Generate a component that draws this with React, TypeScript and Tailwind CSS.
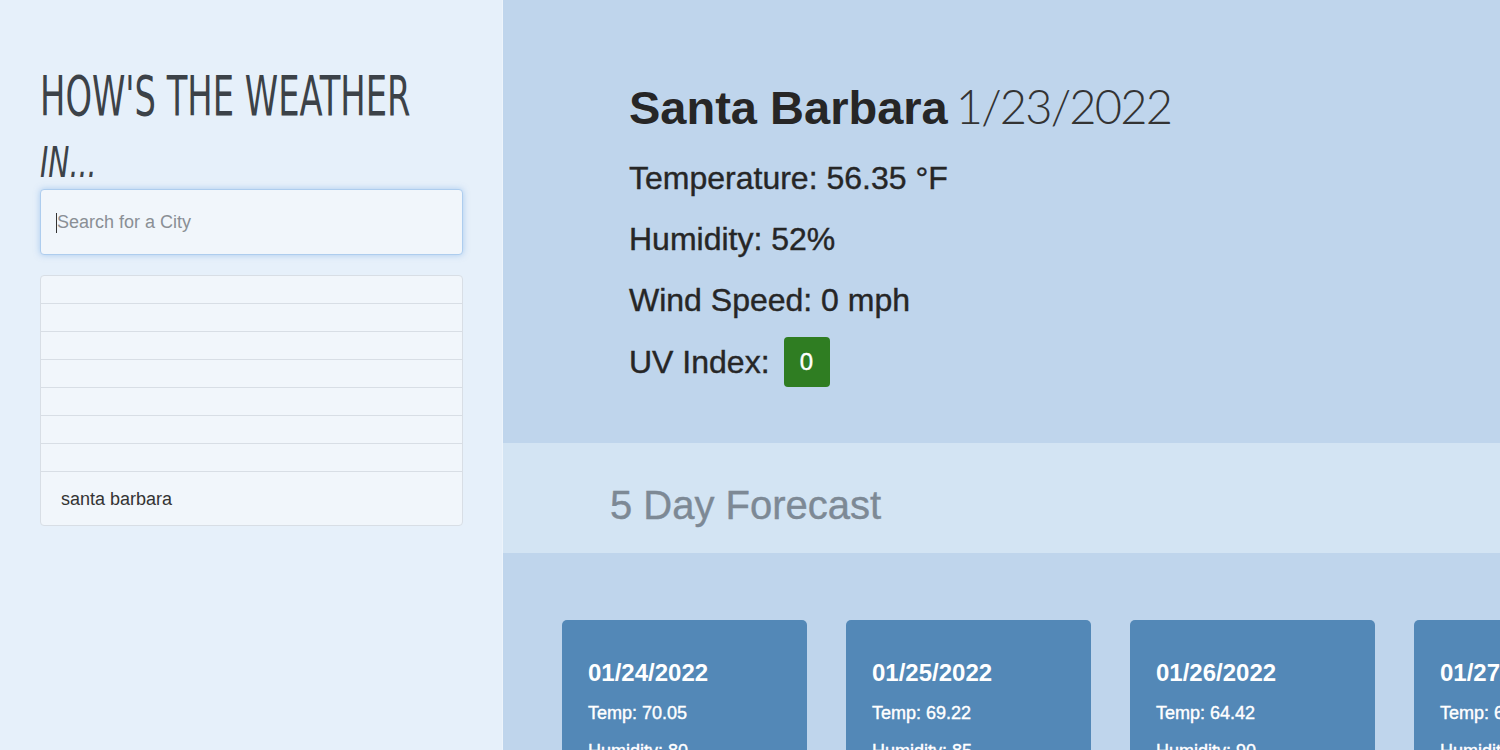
const forecast = [
  { date: "01/24/2022", temp: "70.05", humidity: "80" },
  { date: "01/25/2022", temp: "69.22", humidity: "85" },
  { date: "01/26/2022", temp: "64.42", humidity: "90" },
  { date: "01/27/2022", temp: "63.18", humidity: "88" },
  { date: "01/28/2022", temp: "61.90", humidity: "79" },
];

const body = "font-['Liberation_Sans',Arial,sans-serif]";
const narrow = "font-['Liberation_Sans_Narrow','Arial_Narrow','DejaVu_Sans_Condensed',sans-serif]";
const medium = "[-webkit-text-stroke:0.4px_currentColor]";

export default function App() {
  return (
    <div className={`flex h-[750px] w-[1500px] overflow-hidden ${body}`}>
      {/* sidebar */}
      <aside className="w-[503px] shrink-0 bg-[#e6f0fa] border-r border-[#edf4fb] px-[40px] pt-[68px]">
        <h1 className={`${narrow} text-[56px] leading-none text-[#3c4248] whitespace-nowrap origin-left scale-x-[0.67]`}>
          HOW'S THE WEATHER
        </h1>
        <h3 className={`${narrow} italic text-[43px] leading-none text-[#3c4248] mt-[17px] origin-left scale-x-[0.73]`}>
          IN...
        </h3>
        <div className="mt-[5px] h-[66px] w-[423px] rounded-[4px] border border-[#aecdee] bg-[#f1f6fb] shadow-[0_0_6px_rgba(110,165,230,0.5)] flex items-center px-[15px] pt-[1px]">
          <span className="w-px h-[20px] bg-[#333]" />
          <span className="text-[18px] text-[#8a8f95]">Search for a City</span>
        </div>
        <div className="mt-[20px] w-[423px] rounded-[4px] border border-[#d8dee5] bg-[#f1f6fb] overflow-hidden">
          {Array.from({ length: 7 }).map((_, i) => (
            <div key={i} className="h-[28px] border-b border-[#d8dee5]" />
          ))}
          <div className="h-[53px] flex items-center pl-[20px] text-[18px] leading-none text-[#333]">
            santa barbara
          </div>
        </div>
      </aside>

      {/* main */}
      <main className="flex-1 bg-[#bfd5ec] min-w-0">
        <section className="h-[443px] pl-[126px] pt-[83px] text-[#262626]">
          <h2 className="flex items-baseline gap-[8px] whitespace-nowrap leading-none">
            <span className="text-[47px] font-bold">Santa Barbara</span>
            <span className="text-[47px] font-light font-['Lato',sans-serif] tracking-[-1.8px] text-[#333]">1/23/2022</span>
          </h2>
          <p className={`text-[32px] leading-none mt-[31px] ${medium}`}>Temperature: 56.35 °F</p>
          <p className={`text-[32px] leading-none mt-[29px] ${medium}`}>Humidity: 52%</p>
          <p className={`text-[32px] leading-none mt-[29px] ${medium}`}>Wind Speed: 0 mph</p>
          <div className="flex items-center gap-[14px] mt-[21px]">
            <span className={`text-[32px] leading-none ${medium}`}>UV Index:</span>
            <span className={`h-[50px] w-[46px] rounded-[4px] bg-[#2f7d22] text-white text-[24px] flex items-center justify-center ${medium}`}>
              0
            </span>
          </div>
        </section>

        <section className="h-[110px] bg-[#d3e4f3] pl-[107px] pt-[42px]">
          <h2 className={`text-[40px] leading-none text-[#7d8995] whitespace-nowrap ${medium}`}>5 Day Forecast</h2>
        </section>

        <section className="flex gap-[39px] pl-[59px] pt-[67px]">
          {forecast.map((d) => (
            <div key={d.date} className="w-[245px] h-[260px] shrink-0 rounded-[5px] bg-[#5388b7] px-[26px] pt-[41px] text-white">
              <h5 className="text-[24px] font-bold leading-none">{d.date}</h5>
              <p className={`text-[18px] leading-none mt-[19px] ${medium}`}>Temp: {d.temp}</p>
              <p className={`text-[18px] leading-none mt-[20px] ${medium}`}>Humidity: {d.humidity}</p>
            </div>
          ))}
        </section>
      </main>
    </div>
  );
}
